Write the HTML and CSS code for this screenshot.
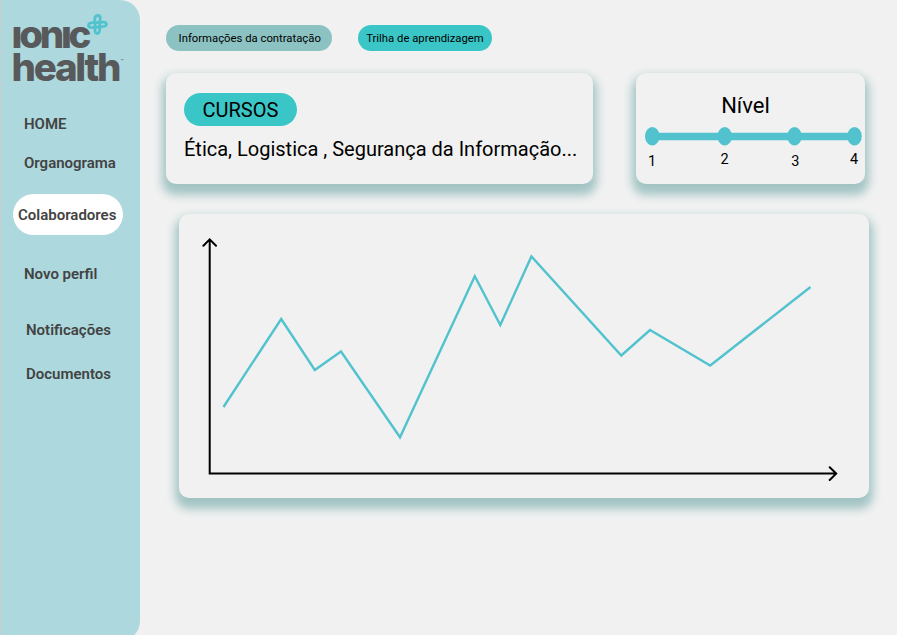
FILE: index.html
```html
<!DOCTYPE html>
<html lang="pt-BR">
<head>
<meta charset="utf-8">
<title>Ionic Health</title>
<link rel="stylesheet" href="styles.css">
</head>
<body>
<div class="app">
  <aside class="sidebar">
    <svg class="logo" width="118" height="76" viewBox="10 10 118 76" role="img" aria-label="Ionic Health">
      <text class="logo-word" x="11.5" y="47.6" textLength="80">ıonıc</text>
      <text class="logo-word" x="11.5" y="80.9" textLength="110">health</text>
      <text class="logo-tm" x="120.5" y="63">™</text>
      <g class="logo-mark">
        <path d="M98 15.500C94 15.500 94.500 20 95 24.500S94 33.500 97 33.500S100 29 99.700 24.500S102 15.500 98 15.500Z"/>
        <path d="M88.500 25.300C88.500 22 93 23 97.500 22.500S106.500 21.500 106.500 24.300S102 26.500 97.500 27S88.500 28.500 88.500 25.300Z"/>
      </g>
    </svg>
    <nav class="nav">
      <a class="nav-item home">HOME</a>
      <a class="nav-item organograma">Organograma</a>
      <a class="nav-item colaboradores">Colaboradores</a>
      <a class="nav-item perfil">Novo perfil</a>
      <a class="nav-item notificacoes">Notificações</a>
      <a class="nav-item documentos">Documentos</a>
    </nav>
  </aside>
  <main class="main">
    <div class="tabs">
      <a class="tab tab-info">Informações da contratação</a>
      <a class="tab tab-trilha">Trilha de aprendizagem</a>
    </div>
    <div class="summary">
      <section class="card courses">
        <h2 class="courses-title">CURSOS</h2>
        <p class="courses-list">Ética, Logistica , Segurança da Informação...</p>
      </section>
      <section class="card level">
        <h2 class="level-title">Nível</h2>
        <svg class="level-track" width="229" height="56" viewBox="636 122 229 56">
          <path class="track" d="M652 136.6H854"/>
          <g class="dots">
            <ellipse cx="652.3" cy="136.3" rx="7.3" ry="9.2"/>
            <ellipse cx="724.7" cy="136.3" rx="7.3" ry="9.2"/>
            <ellipse cx="794.5" cy="136.3" rx="7.3" ry="9.2"/>
            <ellipse cx="854.5" cy="136.3" rx="7.3" ry="9.2"/>
          </g>
          <g class="numbers">
            <text x="652" y="166.3">1</text>
            <text x="724.5" y="164.2">2</text>
            <text x="795.3" y="166.3">3</text>
            <text x="854" y="164.2">4</text>
          </g>
        </svg>
      </section>
    </div>
    <section class="card chart">
      <svg width="690" height="284" viewBox="179 214 690 284">
        <path class="axis" d="M209.7 239.5V473.6H836M203.4 245.7L209.7 239.4L216 245.7M829.7 467.2L836.2 473.6L829.7 480"/>
        <path class="series" d="M223.5 407L281.2 319L314.8 370L341 351.5L400 437.3L474.8 276.3L500.3 325L531.4 256.5L621.3 355.5L650 330L710.2 365.5L810.5 287"/>
      </svg>
    </section>
  </main>
</div>
</body>
</html>
```
FILE: styles.css
```css
* { box-sizing: border-box; }
body { margin: 0; background: #f1f1f1; font-family: Roboto, "Liberation Sans", sans-serif; color: #000; }
.app { display: flex; width: 897px; height: 635px; overflow: hidden; border-left: 1px solid #c8cccc; }
.sidebar { flex: none; width: 138.7px; height: 641px; background: #add8de; border-radius: 0 20px 20px 0; padding-top: 10px; }
.logo { display: block; margin-left: 9px; overflow: visible; }
.logo-word { font: 800 38.5px Inter, "Liberation Sans", sans-serif; fill: #58595b; }
.logo-tm { font: 5px Inter, sans-serif; fill: #58595b; }
.logo-mark { fill: none; stroke: #52c3ce; stroke-width: 2.8; }
.nav { display: flex; flex-direction: column; align-items: flex-start; padding: 28px 0 0 23px; }
.nav-item { font-size: 15px; line-height: 20px; font-weight: 600; color: #434343; white-space: nowrap; }
.organograma { margin-top: 19px; }
.colaboradores { margin: 21px 0 0 -11px; width: 110px; height: 41px; line-height: 43px; border-radius: 21px; background: #fff; padding-left: 5px; }
.perfil { margin-top: 29px; }
.notificacoes { margin: 36px 0 0 2px; }
.documentos { margin: 24px 0 0 2px; }
.main { flex: none; padding: 25px 0 0 26.8px; }
.tabs { display: flex; gap: 26px; height: 26px; }
.tab { height: 25.5px; line-height: 27px; border-radius: 13px; text-align: center; font-size: 11.3px; white-space: nowrap; }
.tab-info { width: 165.5px; background: #8cc2c2; padding-left: 1px; }
.tab-trilha { width: 134px; background: #3ac6c6; }
.summary { display: flex; gap: 42.5px; margin-top: 22.3px; }
.card { background: #f1f1f1; border-radius: 10px; box-shadow: 0 7px 10px 4px #a3c4c4; }
.courses { width: 427px; height: 111px; padding: 19.7px 0 0 17.5px; }
.courses-title { margin: 0; width: 113px; height: 33px; line-height: 34px; border-radius: 17px; background: #3ac6c6; text-align: center; font-size: 20px; font-weight: 400; }
.courses-list { margin: 10px 0 0; font-size: 20px; line-height: 26px; white-space: nowrap; }
.level { width: 229px; height: 111px; padding-top: 19.7px; }
.level-title { margin: 0 0 3px; padding-right: 10px; text-align: center; font-size: 22px; line-height: 26px; font-weight: 400; }
.level-track { display: block; }
.track { stroke: #52c3ce; stroke-width: 7.5; }
.dots { fill: #52c3ce; }
.numbers { font-size: 14.5px; text-anchor: middle; }
.chart { width: 690px; height: 284px; margin: 29.7px 0 0 12.7px; }
.chart svg { display: block; }
.axis { fill: none; stroke: #000; stroke-width: 2; stroke-linecap: round; }
.series { fill: none; stroke: #52c3ce; stroke-width: 2.4; }
```
